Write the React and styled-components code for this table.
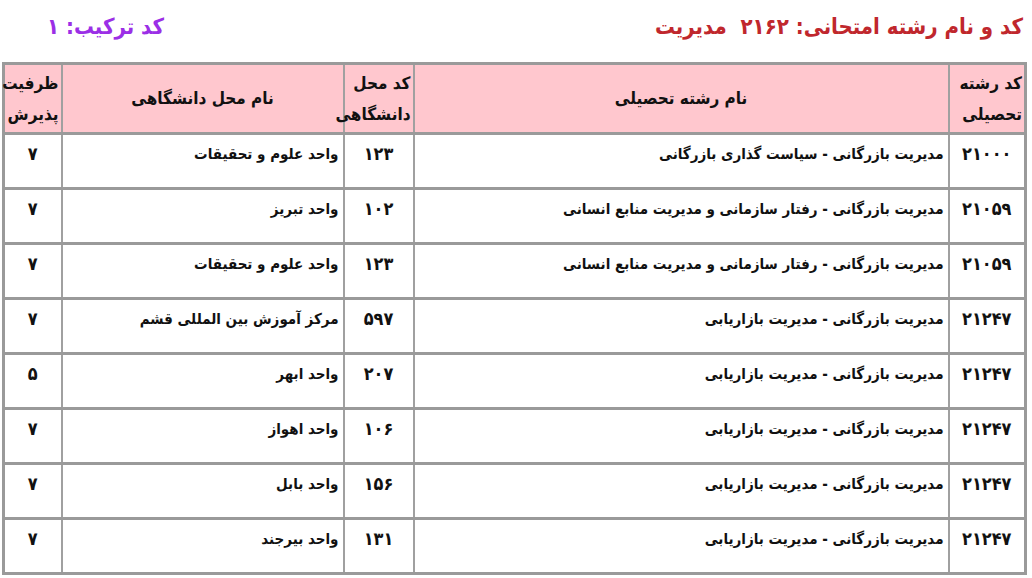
import styled, { createGlobalStyle } from "styled-components";

const GlobalStyle = createGlobalStyle`
  html, body {
    margin: 0;
    padding: 0;
    background: #ffffff;
  }
  body {
    font-family: "DejaVu Sans Condensed", "DejaVu Sans", Tahoma, sans-serif;
  }
`;

const rows = [
  { code: "۲۱۰۰۰", field: "مدیریت بازرگانی - سیاست گذاری بازرگانی", uniCode: "۱۲۳", uni: "واحد علوم و تحقیقات", cap: "۷" },
  { code: "۲۱۰۵۹", field: "مدیریت بازرگانی - رفتار سازمانی و مدیریت منابع انسانی", uniCode: "۱۰۲", uni: "واحد تبریز", cap: "۷" },
  { code: "۲۱۰۵۹", field: "مدیریت بازرگانی - رفتار سازمانی و مدیریت منابع انسانی", uniCode: "۱۲۳", uni: "واحد علوم و تحقیقات", cap: "۷" },
  { code: "۲۱۲۴۷", field: "مدیریت بازرگانی - مدیریت بازاریابی", uniCode: "۵۹۷", uni: "مرکز آموزش بین المللی قشم", cap: "۷" },
  { code: "۲۱۲۴۷", field: "مدیریت بازرگانی - مدیریت بازاریابی", uniCode: "۲۰۷", uni: "واحد ابهر", cap: "۵" },
  { code: "۲۱۲۴۷", field: "مدیریت بازرگانی - مدیریت بازاریابی", uniCode: "۱۰۶", uni: "واحد اهواز", cap: "۷" },
  { code: "۲۱۲۴۷", field: "مدیریت بازرگانی - مدیریت بازاریابی", uniCode: "۱۵۶", uni: "واحد بابل", cap: "۷" },
  { code: "۲۱۲۴۷", field: "مدیریت بازرگانی - مدیریت بازاریابی", uniCode: "۱۳۱", uni: "واحد بیرجند", cap: "۷" },
];

const Page = styled.div`
  direction: rtl;
  padding: 0 5px;
`;

const TitleBar = styled.div`
  display: flex;
  justify-content: space-between;
  align-items: center;
  height: 52px;
  padding: 0 4px 0 42px;
  margin-bottom: 10px;
`;

const Title = styled.h1`
  margin: 0;
  font-size: 22px;
  font-weight: bold;
  color: ${(p) => p.$color};
  white-space: pre;
`;

const Table = styled.table`
  width: 1022px;
  border-collapse: collapse;
  table-layout: fixed;
  border: 3px solid #9a9a9a;
`;

const HeadCell = styled.th`
  height: 67px;
  background: #ffc7ce;
  border-left: 2px solid #a0a0a0;
  border-right: 2px solid #a0a0a0;
  font-size: 17px;
  line-height: 31px;
  font-weight: bold;
  color: #111;
  text-align: ${(p) => (p.$center ? "center" : "right")};
  vertical-align: middle;
  padding: 0 2px;
`;

const Row = styled.tr`
  border-top: 3px solid #9a9a9a;
`;

const Cell = styled.td`
  height: 55px;
  padding: 9px 4px 0;
  box-sizing: border-box;
  border-left: 2px solid #a0a0a0;
  border-right: 2px solid #a0a0a0;
  vertical-align: top;
  font-size: 15px;
  line-height: 20px;
  font-weight: bold;
  color: #111;
  white-space: nowrap;
  text-align: ${(p) => (p.$center ? "center" : "right")};
  ${(p) => p.$num && "font-size: 18px;"}
`;

export default function App() {
  return (
    <>
      <GlobalStyle />
      <Page>
        <TitleBar>
          <Title $color="#c0272d">{"کد و نام رشته امتحانی: ۲۱۶۲  مدیریت"}</Title>
          <Title $color="#9b2fe6">کد ترکیب: ۱</Title>
        </TitleBar>
        <Table>
          <colgroup>
            <col style={{ width: 77 }} />
            <col style={{ width: 535 }} />
            <col style={{ width: 70 }} />
            <col style={{ width: 282 }} />
            <col style={{ width: 58 }} />
          </colgroup>
          <thead>
            <tr>
              <HeadCell>کد رشته تحصیلی</HeadCell>
              <HeadCell $center>نام رشته تحصیلی</HeadCell>
              <HeadCell>کد محل دانشگاهی</HeadCell>
              <HeadCell $center>نام محل دانشگاهی</HeadCell>
              <HeadCell>ظرفیت پذیرش</HeadCell>
            </tr>
          </thead>
          <tbody>
            {rows.map((r, i) => (
              <Row key={i}>
                <Cell $center $num>{r.code}</Cell>
                <Cell>{r.field}</Cell>
                <Cell $center $num>{r.uniCode}</Cell>
                <Cell>{r.uni}</Cell>
                <Cell $center $num>{r.cap}</Cell>
              </Row>
            ))}
          </tbody>
        </Table>
      </Page>
    </>
  );
}
